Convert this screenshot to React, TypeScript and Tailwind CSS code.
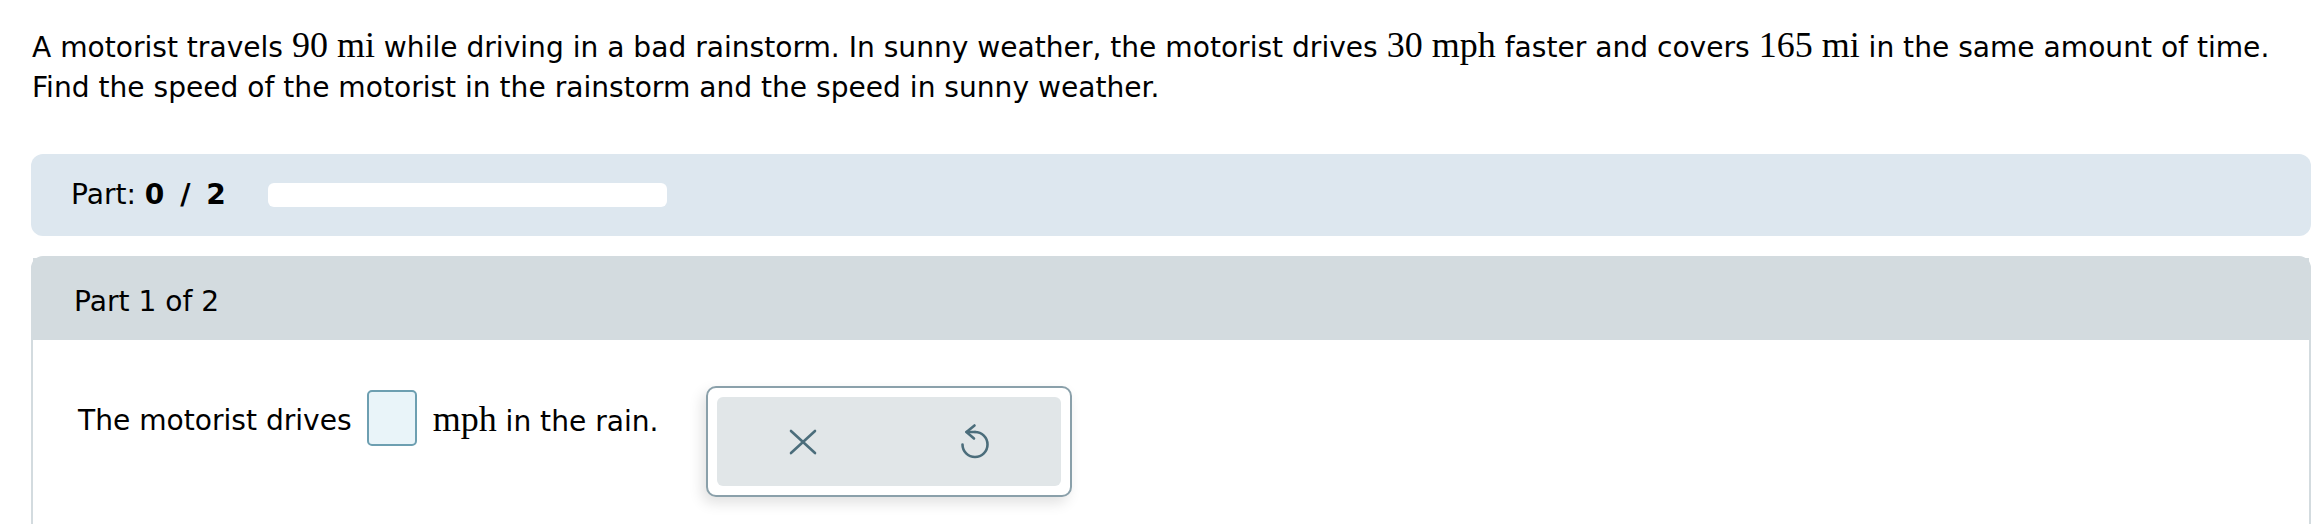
import React from 'react';

function Serif({ children }: { children: React.ReactNode }) {
  return <span className="font-['Liberation_Serif',serif] text-[36px]">{children}</span>;
}

function XIcon() {
  return (
    <svg width="30" height="28" viewBox="0 0 30 28" fill="none" stroke="#4b6d7b" strokeWidth="2.6" strokeLinecap="round">
      <path d="M3 3 L27 25" />
      <path d="M27 3 L3 25" />
    </svg>
  );
}

function UndoIcon() {
  return (
    <svg width="32" height="38" viewBox="0 0 32 38" fill="none" stroke="#4b6d7b" strokeWidth="2.6" strokeLinecap="round" strokeLinejoin="round">
      <path d="M16 9 A12.5 12.5 0 1 1 3.5 21.5" />
      <path d="M16 9 H7.5" />
      <path d="M15.5 2.5 L7.5 9 L15 15.5" />
    </svg>
  );
}

export default function App() {
  return (
    <div className="w-[2316px] h-[524px] overflow-hidden bg-white text-black font-['DejaVu_Sans',sans-serif]">
      <div className="pl-[31px] pr-[5px] pt-[25px]">
        {/* Question */}
        <p className="pl-[1px] text-[28.1px] leading-[40px]">
          A motorist travels <Serif>90 mi</Serif> while driving in a bad rainstorm. In sunny weather, the motorist drives{' '}
          <Serif>30 mph</Serif> faster and covers <Serif>165 mi</Serif> in the same amount of time.
          <br />
          Find the speed of the motorist in the rainstorm and the speed in sunny weather.
        </p>

        {/* Progress */}
        <div className="mt-[46px] h-[82px] bg-[#dde7ef] rounded-[12px] flex items-center pl-[40px] text-[28.1px]">
          <span>
            Part: <span className="font-bold">0<span className="mx-[6px]"> / </span>2</span>
          </span>
          <div className="ml-[42px] w-[399px] h-[24px] bg-white rounded-[6px]" />
        </div>

        {/* Part card */}
        <div className="mt-[20px] border-2 border-[#d3dbdf] rounded-t-[12px] h-[300px]">
          <div className="h-[82px] bg-[#d3dbdf] pl-[41px] pt-[28px] text-[28.1px] leading-[32px]">Part 1 of 2</div>
          <div className="pt-[46px] pl-[45px] flex items-start text-[28.1px] leading-[32px]">
            <div className="mt-[4px] h-[55px] flex items-center">
              <span className="mt-[6px]">The motorist drives</span>
              <span className="ml-[15px] w-[50px] h-[56px] border-2 border-[#6d9fb1] bg-[#e9f4f9] rounded-[5px]" />
              <span className="ml-[16px] mt-[6px]">
                <Serif>mph</Serif> in the rain.
              </span>
            </div>
            <div className="ml-[48px] w-[366px] h-[111px] border-2 border-[#8aa0aa] rounded-[10px] bg-white p-[9px] shadow-[-4px_6px_14px_rgba(0,0,0,0.12)]">
              <div className="h-full bg-[#e1e6e8] rounded-[6px] grid grid-cols-2">
                <div className="flex items-center justify-center">
                  <XIcon />
                </div>
                <div className="flex items-center justify-center">
                  <UndoIcon />
                </div>
              </div>
            </div>
          </div>
        </div>
      </div>
    </div>
  );
}
